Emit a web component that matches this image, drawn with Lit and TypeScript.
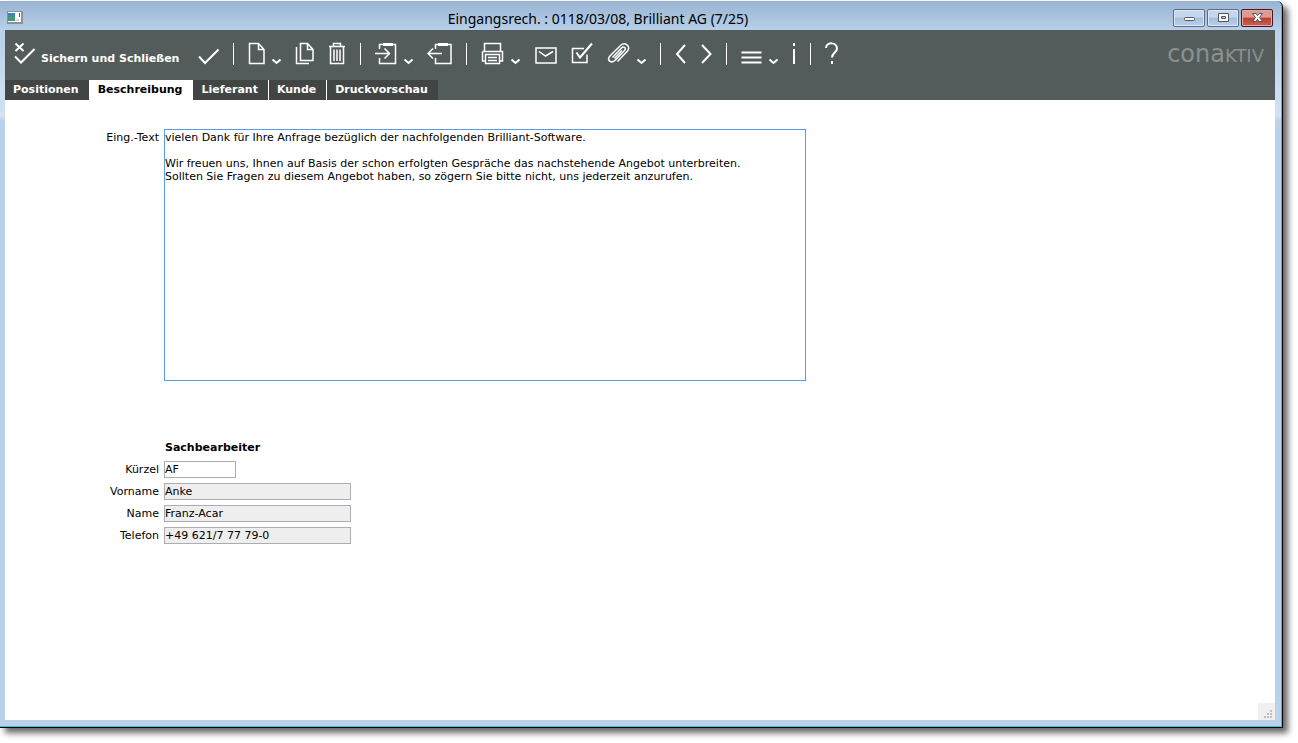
import { LitElement, html, css, svg } from "lit";
import { customElement, state } from "lit/decorators.js";
import { classMap } from "lit/directives/class-map.js";

interface Tool {
  id: string;
  label: string;
  width: number;
  art: unknown;
  menu?: boolean;
}

const check = svg`<path d="M1 14.5 7 21 20.5 7.5" />`;

const groups: Tool[][] = [
  [
    {
      id: "doc", label: "Neu", width: 17, menu: true,
      art: svg`<path d="M1.5 1.5H10.5L16 7.5V21.5H1.5ZM10.5 1.5V7.5H16" />`,
    },
    {
      id: "copy", label: "Duplizieren", width: 19,
      art: svg`<path d="M5.5 1.5H12.5L18 7.5V18.5H5.5ZM12.5 1.5V7.5H18M1.5 5V21.5H14" />`,
    },
    {
      id: "trash", label: "Löschen", width: 18,
      art: svg`<path d="M1 4.5H17M5.5 4V1.5H12.5V4M2.5 5V21.5H15.5V5M6 7.5V19M9 7.5V19M12 7.5V19" />`,
    },
  ],
  [
    {
      id: "import", label: "Einfügen", width: 22, menu: true,
      art: svg`<path d="M4.5 7V2.5H8M18 2.5H20.5V21.5H4.5V16M0 11.5H14M9.5 6.5 14.5 11.5 9.5 16.5" /><path class="solid" d="M8 1H18V4H8Z" />`,
    },
    {
      id: "export", label: "Kopieren", width: 25,
      art: svg`<path d="M8.5 7V2.5H11M21 2.5H24V21.5H8.5V16M1 11.5H15M6 6.5 1 11.5 6 16.5" /><path class="solid" d="M11 1H21V4H11Z" />`,
    },
  ],
  [
    {
      id: "print", label: "Drucken", width: 23, menu: true,
      art: svg`<path d="M3.500 9V1.500H19.500V9M1.500 9.500H21.500V19H19M4 19H1.500V9.500M4.500 12.500H18.500V21.500H4.500ZM7 15.500H16M7 18.500H16" />`,
    },
    {
      id: "mail", label: "E-Mail", width: 23,
      art: svg`<path d="M2 6H22V21H2ZM5 9.5 11.5 14 19 9.5" />`,
    },
    {
      id: "task", label: "Aufgabe", width: 22,
      art: svg`<path d="M13 6.5H1.5V20.5H16V12.5" /><path class="bold" d="M5.5 10.5 9 15.5 21 1.5" />`,
    },
    {
      id: "clip", label: "Anhang", width: 23, menu: true,
      art: svg`<path d="M5.5 15.5 14.5 6C17 3.8 19.5 6.2 17.5 8.5L8.5 18C4.5 22 -0.5 18.5 2.5 14.5L13.5 3.5C18 -0.5 24 4 20.5 9L10.5 19.5M7.5 16.5 15 8.5" />`,
    },
  ],
  [
    { id: "prev", label: "Zurück", width: 11, art: svg`<path class="bold" d="M10 3 2 12 10 21" />` },
    { id: "next", label: "Weiter", width: 12, art: svg`<path class="bold" d="M2 3 10.5 12 2 21" />` },
  ],
  [
    {
      id: "menu", label: "Menü", width: 21, menu: true,
      art: svg`<path class="bold" d="M0.5 10.5H20.5M0.5 15.5H20.5M0.5 20.5H20.5" />`,
    },
    { id: "info", label: "Info", width: 4, art: svg`<path class="bold" d="M2 1V4M2 7V22" />` },
  ],
  [
    {
      id: "help", label: "Hilfe", width: 13,
      art: svg`<path class="bold" d="M1 6C1.5 -0.5 12 0 12 6.5C12 10.5 7 10.5 7 15.5M7 19V22" />`,
    },
  ],
];

const tabs = ["Positionen", "Beschreibung", "Lieferant", "Kunde", "Druckvorschau"];

const letter = `vielen Dank für Ihre Anfrage bezüglich der nachfolgenden Brilliant-Software.

Wir freuen uns, Ihnen auf Basis der schon erfolgten Gespräche das nachstehende Angebot unterbreiten.
Sollten Sie Fragen zu diesem Angebot haben, so zögern Sie bitte nicht, uns jederzeit anzurufen.`;

const fields = [
  { id: "kuerzel", label: "Kürzel", value: "AF", locked: false },
  { id: "vorname", label: "Vorname", value: "Anke", locked: true },
  { id: "name", label: "Name", value: "Franz-Acar", locked: true },
  { id: "telefon", label: "Telefon", value: "+49 621/7 77 79-0", locked: true },
];

@customElement("app-toolbar")
class AppToolbar extends LitElement {
  static styles = css`
    :host {
      display: flex;
      align-items: flex-start;
      gap: 14px;
      height: 50px;
      box-sizing: border-box;
      padding: 12px 11px 0 9px;
      background: #545c5b;
      color: #fff;
    }
    button {
      display: flex;
      align-items: flex-start;
      gap: 6px;
      flex: none;
      padding: 0;
      border: 0;
      background: none;
      color: inherit;
      font: bold 11px/13px "DejaVu Sans", Verdana, sans-serif;
    }
    svg {
      display: block;
      height: 24px;
      fill: none;
      stroke: #fff;
      stroke-width: 1.5;
    }
    .bold {
      stroke-width: 2;
    }
    .solid {
      fill: #fff;
      stroke: none;
    }
    .caption {
      min-width: 143px;
      padding-top: 10px;
      text-align: left;
      white-space: nowrap;
    }
    .divider {
      flex: none;
      width: 1px;
      height: 22px;
      margin-top: 1px;
      background: #fff;
    }
    .logo {
      margin-left: auto;
      color: #8b918f;
      font: 24px/24px "DejaVu Sans", sans-serif;
    }
    .caps {
      font-size: 18px;
      text-transform: uppercase;
    }
  `;

  render() {
    return html`
      <button>
        <svg width="21" viewBox="0 0 21 24" aria-hidden="true">
          <path class="bold" d="M1.5 1.5 9.5 9M9.5 1.5 1.5 9" />
          <path class="bold" d="M1 14.5 7 20.5 20.5 7" />
        </svg>
        <span class="caption">Sichern und Schließen</span>
      </button>
      <button aria-label="Sichern">
        <svg width="21" viewBox="0 0 21 24"><g class="bold">${check}</g></svg>
      </button>
      ${groups.map(
        (group) => html`
          <span class="divider"></span>
          ${group.map(
            (tool) => html`
              <button aria-label=${tool.label}>
                <svg width=${tool.width} viewBox="0 0 ${tool.width} 24">${tool.art}</svg>
                ${tool.menu
                  ? html`<svg width="10" viewBox="0 0 10 24"><path class="bold" d="M1.5 17.5 5.5 21 9.5 17.5" /></svg>`
                  : ""}
              </button>
            `,
          )}
        `,
      )}
      <span class="logo">cona<span class="caps">ktiv</span></span>
    `;
  }
}

@customElement("app-root")
class AppRoot extends LitElement {
  @state() private active = "Beschreibung";

  static styles = css`
    :host {
      display: flex;
      box-sizing: border-box;
      min-height: 100vh;
      padding: 1px 15px 15px 0;
      background: #fff;
      color: #000;
      font: 11px/13px "DejaVu Sans", Verdana, sans-serif;
    }
    .window {
      flex: 1;
      min-width: 0;
      display: flex;
      flex-direction: column;
      box-sizing: border-box;
      padding: 0 7px 7px 5px;
      background: linear-gradient(#98b4d2, #b9d1ea 30px, #d3e2f2 115px, #b9d1ea 120px);
      border-right: 1px solid #000;
      border-bottom: 1px solid #000;
      border-top-right-radius: 6px;
      box-shadow: inset -1px -1px #31c8dc, 5px 5px 6px rgba(0, 0, 0, 0.6);
    }
    .titlebar {
      display: grid;
      grid-template-columns: auto 1fr auto;
      align-items: center;
      height: 29px;
      padding: 0 2px;
    }
    .title {
      margin: 0;
      padding-top: 6px;
      font: 14px/20px "Noto Sans", "Open Sans", sans-serif;
      text-align: center;
      white-space: nowrap;
    }
    .appicon {
      margin-top: 5px;
    }
    .controls {
      display: flex;
      gap: 2px;
      padding-top: 4px;
    }
    .control {
      display: grid;
      place-items: center;
      width: 32px;
      height: 18px;
      padding: 0;
      box-sizing: border-box;
      border: 1px solid #5c6d8c;
      border-radius: 2px;
      background: linear-gradient(#c4d7ec 45%, #a4bdd9 50%, #bcd2e9);
      box-shadow: inset 0 0 0 1px #dce8f5;
    }
    .close {
      border-color: #4c1424;
      background: linear-gradient(#dc9b90 45%, #b9412f 50%, #cc6250);
      box-shadow: inset 0 0 0 1px #e6aaa0;
    }
    .tabs {
      display: flex;
      height: 20px;
      background: #545c5b;
    }
    .tab {
      padding: 0 10px 0 8px;
      border: 0;
      border-right: 1px solid #fff;
      background: #414645;
      color: #fff;
      font: bold 11px/20px "DejaVu Sans", Verdana, sans-serif;
    }
    .tab:last-child {
      border-right: 0;
    }
    .tab.active {
      background: #fff;
      color: #000;
    }
    .content {
      flex: 1;
      display: flex;
      flex-direction: column;
      background: #fff;
    }
    .form {
      flex: 1;
      display: grid;
      grid-template-columns: 154px minmax(0, 1fr);
      column-gap: 5px;
      row-gap: 5px;
      align-content: start;
      padding-top: 29px;
    }
    label {
      padding-top: 2px;
      text-align: right;
    }
    textarea,
    input {
      box-sizing: border-box;
      margin: 0;
      padding: 0;
      border: 1px solid #abadb3;
      border-radius: 0;
      outline: 0;
      background: #fff;
      color: #000;
      font: inherit;
    }
    textarea {
      width: 642px;
      max-width: 100%;
      height: 252px;
      padding-top: 1px;
      border-color: #569de5;
      resize: none;
      overflow: hidden;
    }
    input {
      width: 187px;
      height: 17px;
    }
    input.short {
      width: 72px;
    }
    input[readonly] {
      background: #eee;
    }
    .heading {
      grid-column: 2;
      margin: 55px 0 2px 1px;
      font: bold 11px/13px "DejaVu Sans", Verdana, sans-serif;
    }
    .grip {
      align-self: flex-end;
      background: #f0f0f0;
    }
    svg {
      display: block;
    }
  `;

  render() {
    return html`
      <main class="window">
        <header class="titlebar">
          <svg class="appicon" width="16" height="14" viewBox="0 0 16 14" aria-hidden="true">
            <path fill="#8b9096" d="M0 0H16V13H0Z" />
            <path fill="#fff" d="M1 1H14V11H1Z" />
            <path fill="#4386ac" d="M1 2H8V6H1Z" />
            <path fill="#459a6a" d="M1 6H8V10H1Z" />
            <path fill="#376994" d="M12 2H13V6H12Z" />
            <path fill="#ddd" d="M9 8H12V10H9Z" />
          </svg>
          <h1 class="title">Eingangsrech. : 0118/03/08, Brilliant AG (7/25)</h1>
          <div class="controls">
            <button class="control" aria-label="Minimieren">
              <svg width="13" height="11" viewBox="0 0 13 11">
                <rect x="1.5" y="5.5" width="10" height="3" rx="1" fill="#fff" stroke="#535666" />
              </svg>
            </button>
            <button class="control" aria-label="Maximieren">
              <svg width="13" height="11" viewBox="0 0 13 11">
                <path fill="#fff" fill-rule="evenodd" stroke="#535666" d="M1.5 1.5H11.5V9.5H1.5ZM4.5 4.5V6.5H8.5V4.5Z" />
              </svg>
            </button>
            <button class="control close" aria-label="Schließen">
              <svg width="13" height="11" viewBox="0 0 13 11">
                <path fill="#fff" stroke="#535666" d="M1.5 1.5H4.8L6.5 3.5 8.2 1.5H11.5L8.5 5.5 11.5 9.5H8.2L6.5 7.5 4.8 9.5H1.5L4.5 5.5Z" />
              </svg>
            </button>
          </div>
        </header>
        <app-toolbar></app-toolbar>
        <nav class="tabs">
          ${tabs.map(
            (tab) => html`<button
              class=${classMap({ tab: true, active: tab === this.active })}
              @click=${() => (this.active = tab)}
            >${tab}</button>`,
          )}
        </nav>
        <section class="content">
          <div class="form">
            <label for="text">Eing.-Text</label>
            <textarea id="text" spellcheck="false" .value=${letter}></textarea>
            <h2 class="heading">Sachbearbeiter</h2>
            ${fields.map(
              (field) => html`
                <label for=${field.id}>${field.label}</label>
                <input
                  id=${field.id}
                  class=${classMap({ short: !field.locked })}
                  .value=${field.value}
                  ?readonly=${field.locked}
                />
              `,
            )}
          </div>
          <svg class="grip" width="17" height="17" viewBox="0 0 17 17" aria-hidden="true">
            <path fill="#bfbfbf" d="M12 7h2v2h-2zM9 10h2v2H9zM12 10h2v2h-2zM6 13h2v2H6zM9 13h2v2H9zM12 13h2v2h-2z" />
          </svg>
        </section>
      </main>
    `;
  }
}
